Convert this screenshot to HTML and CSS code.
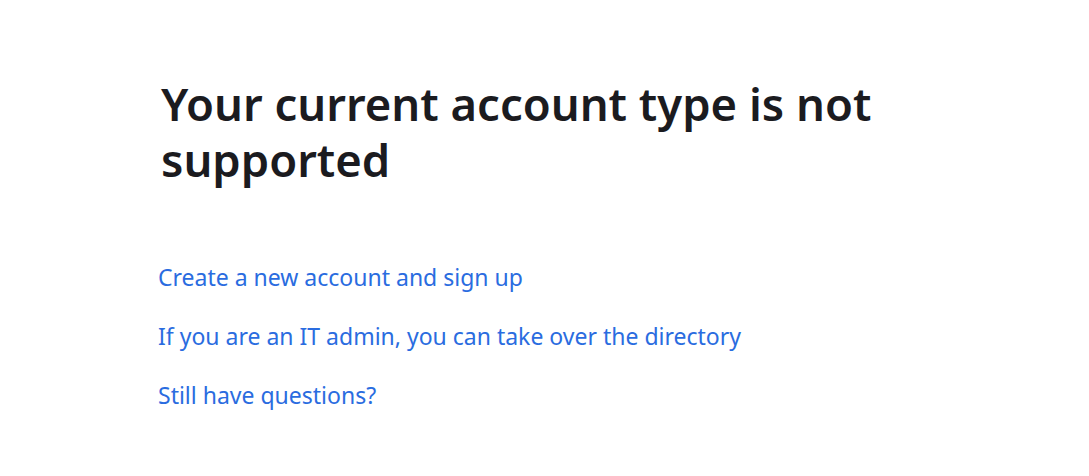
FILE: index.html
```html
<!DOCTYPE html>
<html lang="en">
<head>
  <meta charset="UTF-8">
  <title>Account type not supported</title>
  <link rel="stylesheet" href="styles.css">
</head>
<body>

<div class="page">
  <h1 class="title">Your current account type is not supported</h1>

  <ul class="options">
    <li><a href="#">Create a new account and sign up</a></li>
    <li><a href="#">If you are an IT admin, you can take over the directory</a></li>
    <li><a href="#">Still have questions?</a></li>
  </ul>
</div>

</body>
</html>
```

FILE: styles.css
```css
body { margin: 0; background: #fff; font-family: "Segoe UI", "Noto Sans", Arial, sans-serif; }
.page { padding: 75px 0 0 158px; }
.title { margin: 0 0 0 3px; max-width: 760px; font-size: 45.4px; font-weight: 600; line-height: 56px; color: #1b1b1f; }
.options { list-style: none; margin: 75px 0 0; padding: 0; }
.options li { margin-bottom: 29px; font-size: 23px; line-height: 30px; }
.options a { color: #2a6ce0; text-decoration: none; }
```
